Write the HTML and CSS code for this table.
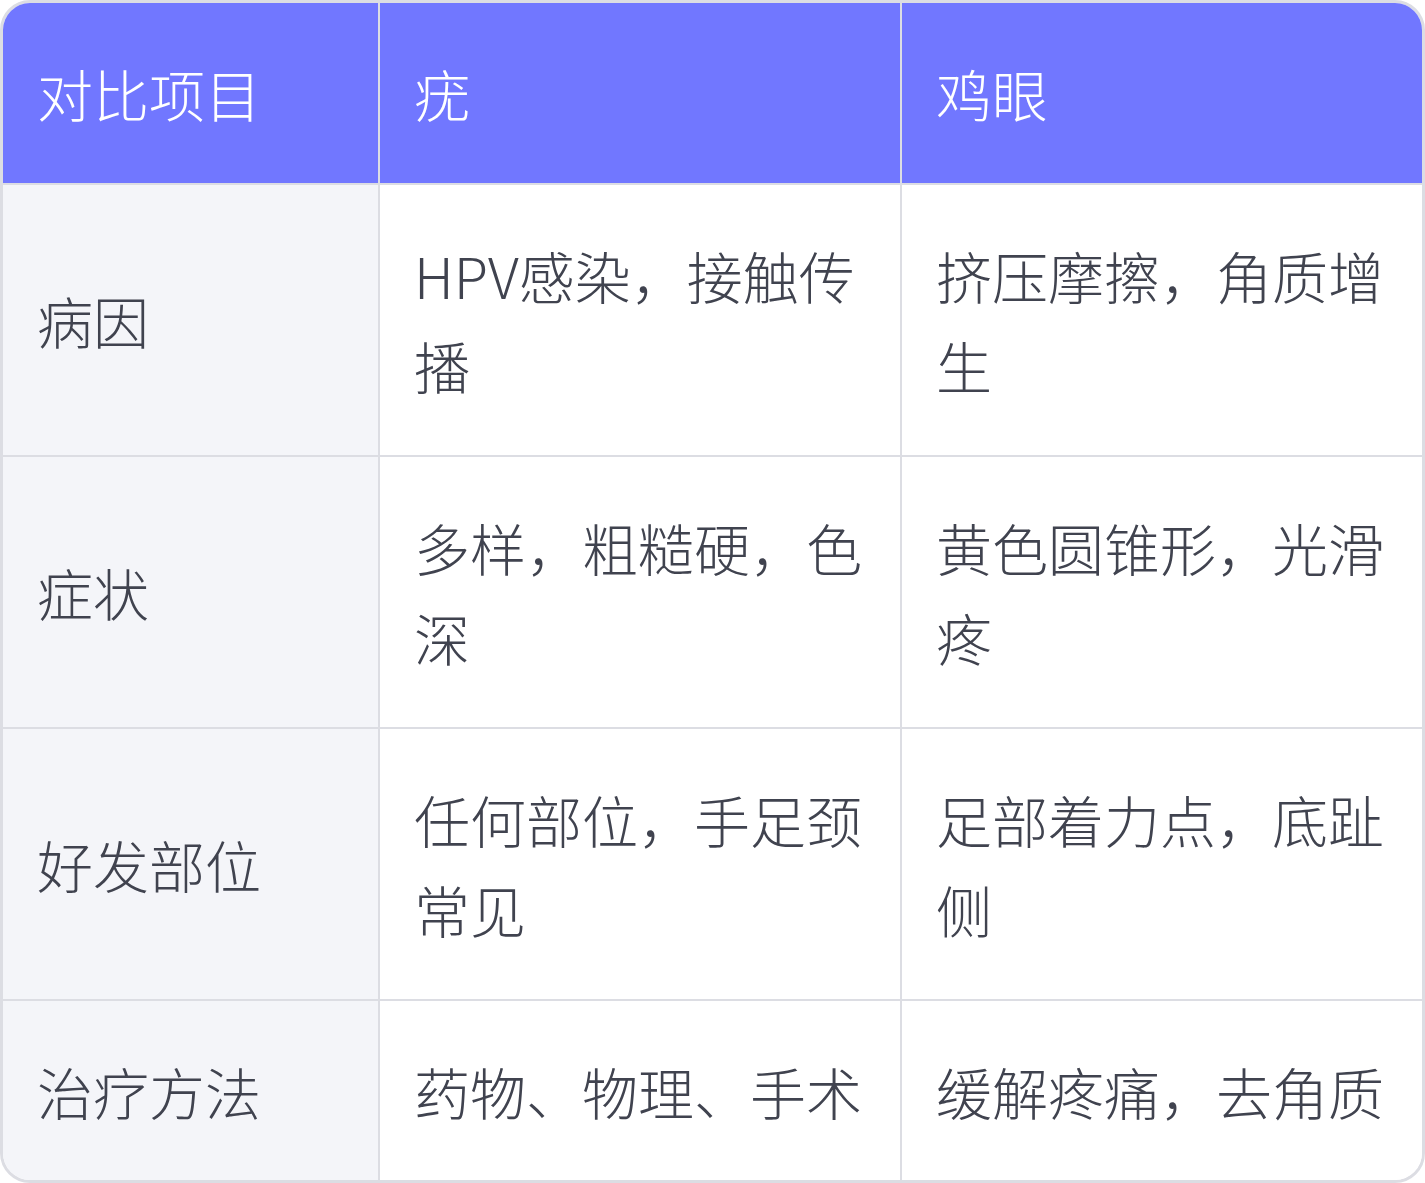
FILE: index.html
```html
<!DOCTYPE html>
<html lang="zh-CN">
<head>
<meta charset="utf-8">
<title>疣与鸡眼对比</title>
<link rel="stylesheet" href="styles.css">
</head>
<body>
<div class="table">
  <div class="cell head">对比项目</div>
  <div class="cell head">疣</div>
  <div class="cell head last">鸡眼</div>

  <div class="cell label">病因</div>
  <div class="cell">HPV感染，接触传播</div>
  <div class="cell last">挤压摩擦，角质增生</div>

  <div class="cell label">症状</div>
  <div class="cell">多样，粗糙硬，色深</div>
  <div class="cell last">黄色圆锥形，光滑疼</div>

  <div class="cell label">好发部位</div>
  <div class="cell">任何部位，手足颈常见</div>
  <div class="cell last">足部着力点，底趾侧</div>

  <div class="cell label bottom">治疗方法</div>
  <div class="cell bottom">药物、物理、手术</div>
  <div class="cell last bottom">缓解疼痛，去角质</div>
</div>
</body>
</html>
```

FILE: styles.css
```css
html, body {
  margin: 0;
  padding: 0;
  background: #ffffff;
}

.table {
  box-sizing: border-box;
  width: 1425px;
  border: 3px solid #dcdde3;
  border-radius: 30px;
  overflow: hidden;
  display: grid;
  grid-template-columns: 377px 522px 1fr;
  font-family: "Noto Sans CJK SC Light", "Noto Sans CJK SC DemiLight", "Noto Sans CJK SC", "Noto Sans", sans-serif;
  font-weight: 300;
  font-size: 56px;
  line-height: 90px;
  color: #40434f;
}

.cell {
  box-sizing: border-box;
  display: flex;
  align-items: center;
  padding: 45px 34px;
  border-right: 2px solid #dcdde3;
  border-bottom: 2px solid #dcdde3;
  background: #ffffff;
}

.cell.last {
  border-right: none;
}

.cell.bottom {
  border-bottom: none;
  padding-bottom: 44px;
}

.cell.head {
  background: #7177ff;
  color: #ffffff;
}

.cell.label {
  background: #f4f5f9;
}
```
